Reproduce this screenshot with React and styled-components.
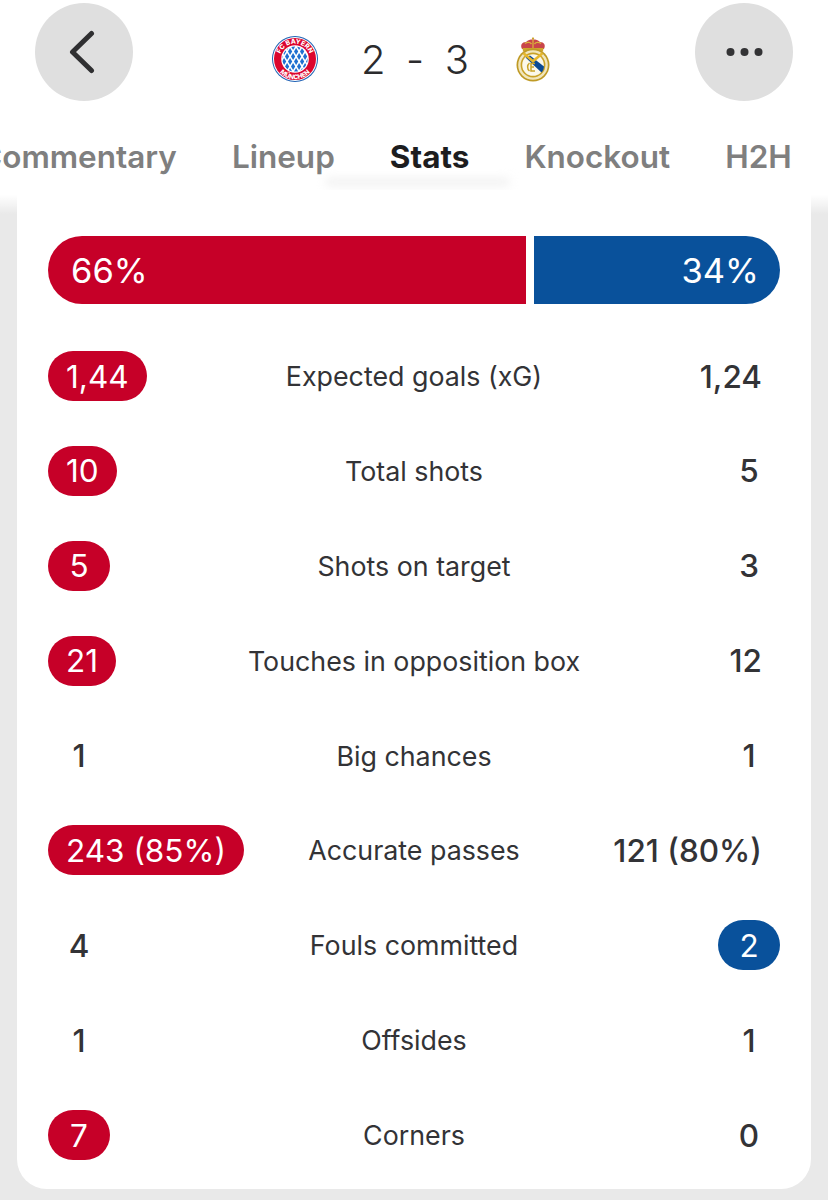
import React from 'react';
import styled, { createGlobalStyle } from 'styled-components';

const red = '#c60028';
const blue = '#09519b';

const stats = [
    { label: 'Expected goals (xG)', home: '1,44', away: '1,24', lead: 'home' },
    { label: 'Total shots', home: '10', away: '5', lead: 'home' },
    { label: 'Shots on target', home: '5', away: '3', lead: 'home' },
    { label: 'Touches in opposition box', home: '21', away: '12', lead: 'home' },
    { label: 'Big chances', home: '1', away: '1' },
    { label: 'Accurate passes', home: '243 (85%)', away: '121 (80%)', lead: 'home' },
    { label: 'Fouls committed', home: '4', away: '2', lead: 'away' },
    { label: 'Offsides', home: '1', away: '1' },
    { label: 'Corners', home: '7', away: '0', lead: 'home' },
];

const tabs = ['Commentary', 'Lineup', 'Stats', 'Knockout', 'H2H'];

const GlobalStyle = createGlobalStyle`
html, body {
    margin: 0;
    padding: 0;
    background: #e9e9e9;
}
body {
    font-family: Inter, "Liberation Sans", sans-serif;
    color: #2b2b2d;
}
`;

const Page = styled.div`
width: 828px;
height: 1200px;
overflow: hidden;
`;

const Header = styled.header`
background: #fff;
height: 190px;
position: relative;
z-index: 1;
/* frosted fade where the header meets the card */
&::after {
    content: '';
    position: absolute;
    left: 0;
    right: 0;
    top: 190px;
    height: 24px;
    background: linear-gradient(#fff 20%, rgba(255, 255, 255, 0));
}
/* text scrolled under the header, blurred */
&::before {
    content: '';
    position: absolute;
    left: 325px;
    top: 178px;
    width: 185px;
    height: 8px;
    border-radius: 4px;
    background: #f1f1f1;
    filter: blur(5px);
}
`;

const TopBar = styled.div`
display: flex;
align-items: flex-start;
justify-content: space-between;
padding: 3px 35px 0;
height: 101px;
box-sizing: border-box;
`;

const RoundButton = styled.div`
width: 98px;
height: 98px;
border-radius: 50%;
background: #dfdfdf;
display: flex;
align-items: center;
justify-content: center;
`;

const Score = styled.div`
display: flex;
align-items: center;
height: 46px;
margin-top: 33px;
margin-right: 6px;
`;

const ScoreText = styled.div`
font-size: 40px;
font-weight: 300;
color: #2b2b2d;
width: 108px;
display: flex;
justify-content: space-between;
margin: 0 47px 0 43px;
`;

const Tabs = styled.nav`
display: flex;
gap: 55px;
margin-left: -21px;
margin-top: 35px;
white-space: nowrap;
position: relative;
z-index: 1;
`;

const Tab = styled.div`
font-size: 31.5px;
line-height: 42px;
font-weight: ${p => (p.$active ? 700 : 600)};
color: ${p => (p.$active ? '#1d1d1f' : '#7f7f7f')};
`;

const Card = styled.main`
background: #fff;
margin: 0 17px;
padding: 46px 31px 0;
height: 999px;
box-sizing: border-box;
border-radius: 0 0 30px 30px;
`;

const Possession = styled.div`
display: grid;
grid-template-columns: ${p => p.$home}fr ${p => p.$away}fr;
gap: 8px;
height: 68px;
margin-bottom: 47px;
`;

const PossessionBar = styled.div`
background: ${p => (p.$side === 'home' ? red : blue)};
color: #fff;
font-size: 34.5px;
display: flex;
align-items: center;
justify-content: ${p => (p.$side === 'home' ? 'flex-start' : 'flex-end')};
padding: ${p => (p.$side === 'home' ? '0 0 0 23px' : '0 21px 0 0')};
border-radius: ${p => (p.$side === 'home' ? '34px 0 0 34px' : '0 34px 34px 0')};
`;

const Rows = styled.div`
display: flex;
flex-direction: column;
gap: 44.9px;
`;

const Row = styled.div`
display: grid;
grid-template-columns: 1fr 336px 1fr;
align-items: center;
height: 50px;
`;

const Label = styled.div`
text-align: center;
font-size: 26.8px;
color: #333336;
`;

const Value = styled.div`
justify-self: ${p => (p.$side === 'home' ? 'start' : 'end')};
height: 50px;
min-width: 62px;
box-sizing: border-box;
display: flex;
align-items: center;
justify-content: center;
padding: 0 18px;
border-radius: 25px;
font-size: 31.5px;
white-space: nowrap;
font-weight: ${p => (p.$lead ? 400 : 450)};
color: ${p => (p.$lead ? '#fff' : '#333336')};
background: ${p => (p.$lead ? (p.$side === 'home' ? red : blue) : 'transparent')};
`;

const BayernLogo = () => (
    <svg width="46" height="46" viewBox="0 0 46 46">
        <defs>
            <clipPath id="bayernInner"><circle cx="23" cy="23" r="12.6" /></clipPath>
            <path id="bayernTop" d="M7.6 23 A15.4 15.4 0 0 1 38.4 23" />
            <path id="bayernBottom" d="M2.8 23 A20.2 20.2 0 0 0 43.2 23" />
        </defs>
        <circle cx="23" cy="23" r="23" fill="#1f62b5" />
        <circle cx="23" cy="23" r="22" fill="#fff" />
        <circle cx="23" cy="23" r="21" fill="#dc052d" />
        <circle cx="23" cy="23" r="13.8" fill="#fff" />
        <g clipPath="url(#bayernInner)">
            {[0, 1, 2, 3, 4, 5].flatMap(r => [0, 1, 2, 3, 4].map(c => (
                <path
                    key={`${r}_${c}`}
                    d={`M${c * 6 + 7 + (r % 2) * 3} ${r * 5 + 10.5}l2.1 -3.6l2.1 3.6l-2.1 3.6z`}
                    fill="#1f6fd0"
                />
            )))}
        </g>
        <text fontFamily="Inter, sans-serif" fontSize="6.6" fontWeight="800" fill="#fff" textAnchor="middle">
            <textPath href="#bayernTop" startOffset="50%">FC BAYERN</textPath>
        </text>
        <text fontFamily="Inter, sans-serif" fontSize="6.4" fontWeight="800" fill="#fff" textAnchor="middle">
            <textPath href="#bayernBottom" startOffset="50%">MÜNCHEN</textPath>
        </text>
    </svg>
);

const RealLogo = () => (
    <svg width="34" height="46" viewBox="0 0 34 46">
        <path d="M6 13C4 9 6 6 10 6C12 4 14 3.5 17 3.5C20 3.5 22 4 24 6C28 6 30 9 28 13Z" fill="#c9454a" />
        <path d="M9 7.5C11 6 14 6 15.5 8M25 7.5C23 6 20 6 18.5 8M17 4V12" stroke="#d9b13b" strokeWidth="1.3" fill="none" />
        <path d="M17 1L18.2 2.6L17 4.2L15.8 2.6Z" fill="#c9a227" />
        <path d="M6.5 12H27.5L27 15.5H7Z" fill="#cfa52e" />
        <circle cx="17" cy="29" r="16.5" fill="#bf9a25" />
        <circle cx="17" cy="29" r="14.8" fill="#f1e6bd" />
        <circle cx="17" cy="29" r="12.4" fill="#c9a227" />
        <circle cx="17" cy="29" r="10.8" fill="#fbf8ea" />
        <path d="M9.5 21.5L14 19.5L28 30.5C27.8 33 27 35 25.5 36.5Z" fill="#0b4a94" />
        <path d="M8 16L17 23.5L26 16L27 18.5L17 27L7 18.5Z" fill="#e6b72c" />
        <path d="M13.5 27C11 29 11 33 13.5 35M19 27.5H15V35H19M15 31H18" stroke="#c9a227" strokeWidth="1.5" fill="none" />
    </svg>
);

const App = () => (
    <Page>
        <GlobalStyle />
        <Header>
            <TopBar>
                <RoundButton>
                    <svg width="30" height="46" viewBox="0 0 30 46">
                        <path d="M22.5 4.5L3.5 23L22.5 41.5" fill="none" stroke="#2f2f31" strokeWidth="5" strokeLinecap="round" strokeLinejoin="round" />
                    </svg>
                </RoundButton>
                <Score>
                    <BayernLogo />
                    <ScoreText><span>2</span><span>-</span><span>3</span></ScoreText>
                    <RealLogo />
                </Score>
                <RoundButton>
                    <svg width="37" height="10" viewBox="0 0 37 10">
                        <circle cx="4.5" cy="5" r="4" fill="#333335" />
                        <circle cx="18.5" cy="5" r="4" fill="#333335" />
                        <circle cx="32.5" cy="5" r="4" fill="#333335" />
                    </svg>
                </RoundButton>
            </TopBar>
            <Tabs>
                {tabs.map(tab => (
                    <Tab key={tab} $active={tab === 'Stats'}>{tab}</Tab>
                ))}
            </Tabs>
        </Header>
        <Card>
            <Possession $home={66} $away={34}>
                <PossessionBar $side="home">66%</PossessionBar>
                <PossessionBar $side="away">34%</PossessionBar>
            </Possession>
            <Rows>
                {stats.map(({ label, home, away, lead }) => (
                    <Row key={label}>
                        <Value $side="home" $lead={lead === 'home'}>{home}</Value>
                        <Label>{label}</Label>
                        <Value $side="away" $lead={lead === 'away'}>{away}</Value>
                    </Row>
                ))}
            </Rows>
        </Card>
    </Page>
);

export default App;
